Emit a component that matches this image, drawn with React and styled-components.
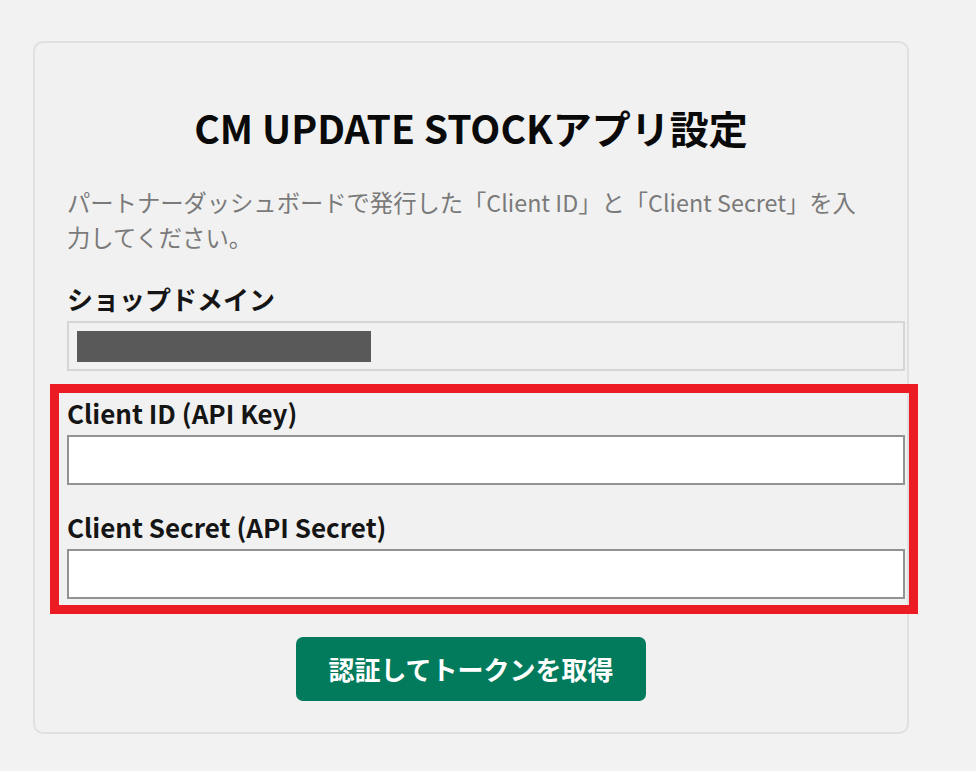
import React from 'react';
import styled, { createGlobalStyle } from 'styled-components';

const GlobalStyle = createGlobalStyle`
    body {
        margin: 0;
        background-color: #f2f2f2;
        font-family: "Noto Sans CJK JP", "Noto Sans", sans-serif;
    }
`;

const Page = styled.div`
    padding: 41px 0 40px 33px;
`;

const Card = styled.div`
    box-sizing: border-box;
    width: 876px;
    padding: 32px 32px 31px;
    background-color: #f1f1f1;
    border: 2px solid #e0e0e0;
    border-radius: 10px;
    display: flex;
    flex-direction: column;
`;

const Title = styled.h1`
    margin: 29px 0 34px;
    font-size: 39px;
    line-height: 1.2;
    font-weight: 700;
    color: #0a0a0a;
    text-align: center;
`;

const Description = styled.p`
    margin: 0 10px 24px 0;
    font-size: 23.3px;
    line-height: 35px;
    color: #7a7a7a;
`;

const Field = styled.div`
    display: flex;
    flex-direction: column;
    gap: 3px;
    & + & {
        margin-top: 22px;
    }
`;

const Label = styled.label`
    font-size: 26px;
    line-height: 1.5;
    font-weight: 700;
    color: #151515;
`;

// content-box width: 100% + padding, so the fields run past the card padding
const Input = styled.input`
    box-sizing: content-box;
    height: 46px;
    width: 100%;
    padding: 0 13px;
    border: 2px solid #929292;
    background-color: #ffffff;
    font-family: inherit;
    font-size: 22px;
`;

const MaskedBox = styled.div`
    box-sizing: content-box;
    width: 100%;
    height: 31px;
    padding: 8px 18px 7px 8px;
    border: 2px solid #d6d6d6;
    background-color: #f1f1f1;
`;

const Redacted = styled.span`
    display: block;
    width: 294px;
    height: 31px;
    background-color: #595959;
`;

const Highlighted = styled.div`
    position: relative;
    margin-top: 22px;
`;

const HighlightFrame = styled.div`
    position: absolute;
    top: -9px;
    right: -43px;
    bottom: -15px;
    left: -17px;
    border: 9px solid #ec1c24;
    pointer-events: none;
`;

const Button = styled.button`
    align-self: center;
    margin-top: 38px;
    width: 350px;
    height: 64px;
    border: none;
    border-radius: 7px;
    background-color: #017b5c;
    color: #ffffff;
    font-family: inherit;
    font-size: 26px;
    font-weight: 700;
    cursor: pointer;
`;

const App = () => {
    return (
        <Page>
            <GlobalStyle />
            <Card>
                <Title>CM UPDATE STOCKアプリ設定</Title>
                <Description>
                    パートナーダッシュボードで発行した「Client ID」と「Client Secret」を入力してください。
                </Description>
                <Field>
                    <Label>ショップドメイン</Label>
                    <MaskedBox>
                        <Redacted />
                    </MaskedBox>
                </Field>
                <Highlighted>
                    <Field>
                        <Label>Client ID (API Key)</Label>
                        <Input type="text" />
                    </Field>
                    <Field>
                        <Label>Client Secret (API Secret)</Label>
                        <Input type="password" />
                    </Field>
                    <HighlightFrame />
                </Highlighted>
                <Button type="button">認証してトークンを取得</Button>
            </Card>
        </Page>
    );
};

export default App;
